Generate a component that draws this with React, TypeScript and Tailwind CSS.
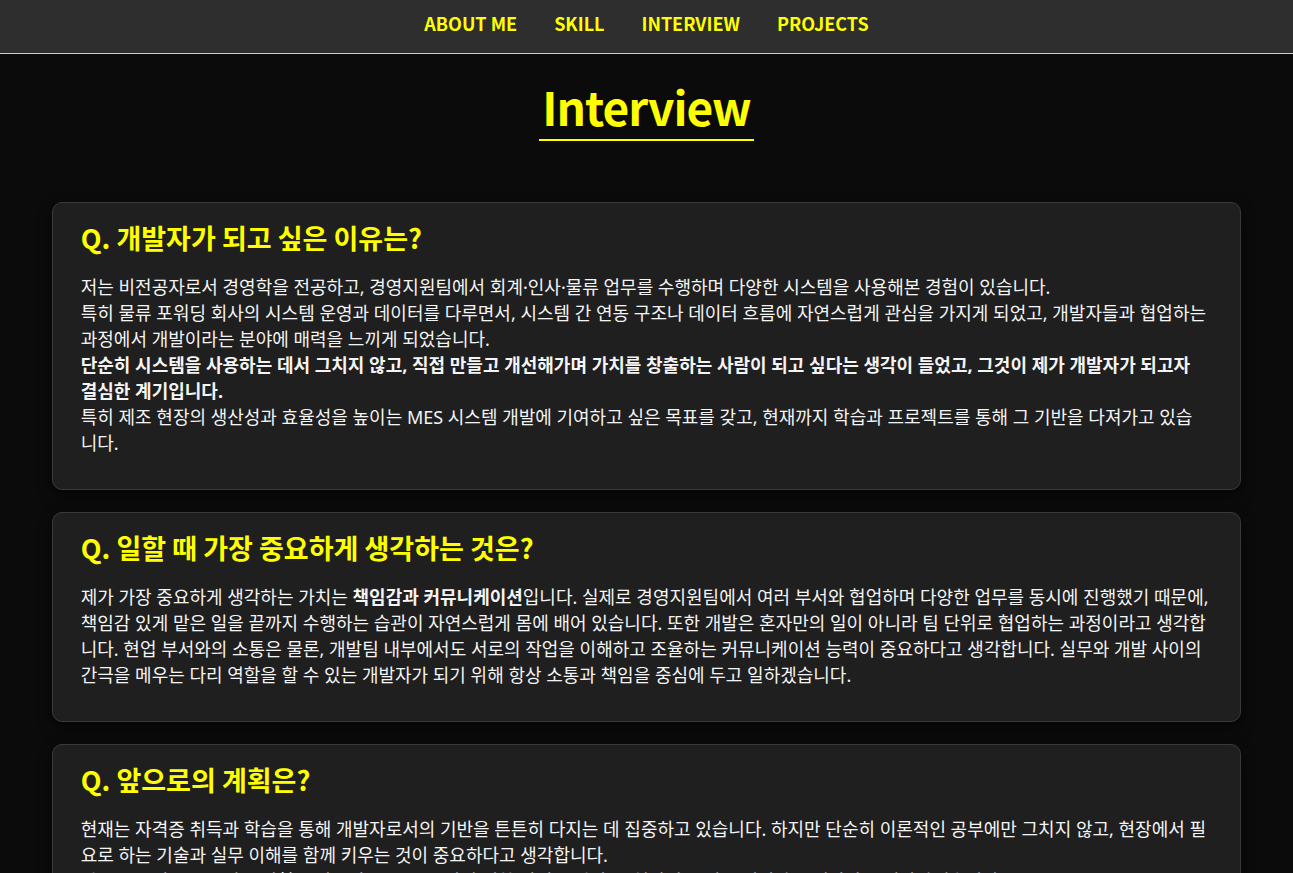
const NAV = ['ABOUT ME', 'SKILL', 'INTERVIEW', 'PROJECTS'];

function Card({
  title,
  narrow,
  children,
}: {
  title: string;
  narrow?: boolean;
  children: React.ReactNode;
}) {
  return (
    <section className="rounded-[10px] border border-[#3a3a3a] bg-[#1f1f1f] px-7 pt-[15px] pb-[33px] shadow-[0_6px_14px_rgba(0,0,0,0.6)]">
      <h3 className="text-[27px] font-bold leading-[normal] text-[#ffff00]">{title}</h3>
      <p
        className={`mt-[17px] text-[18px] leading-[26px] text-[#f4f4f4] ${narrow ? 'pr-[4px]' : ''}`}
        style={{ fontFamily: '"Noto Sans", "Noto Sans CJK KR", sans-serif' }}
      >
        {children}
      </p>
    </section>
  );
}

export default function App() {
  return (
    <div
      className="min-h-screen bg-[#0b0b0b]"
      style={{ fontFamily: '"Noto Sans CJK KR", "Noto Sans", sans-serif' }}
    >
      <nav className="flex h-[54px] items-center justify-center gap-[37px] border-b border-[#cfcfcf] bg-[#2e2e2e] pb-[6px]">
        {NAV.map((item) => (
          <a key={item} href="#" className="text-[18px] font-bold text-[#ffff00]">
            {item}
          </a>
        ))}
      </nav>

      <main className="mx-auto w-[92%] pt-[19px] pb-10">
        <div className="flex justify-center">
          <h2 className="border-b-2 border-[#ffff00] px-[3px] text-[46px] leading-[normal] tracking-[-1px] font-bold text-[#ffff00]">
            Interview
          </h2>
        </div>

        <div className="mt-[61px] flex flex-col gap-[22px]">
          <Card title="Q. 개발자가 되고 싶은 이유는?" narrow>
            저는 비전공자로서 경영학을 전공하고, 경영지원팀에서 회계·인사·물류 업무를 수행하며 다양한 시스템을 사용해본 경험이 있습니다.
            <br />
            특히 물류 포워딩 회사의 시스템 운영과 데이터를 다루면서, 시스템 간 연동 구조나 데이터 흐름에 자연스럽게 관심을 가지게 되었고, 개발자들과 협업하는 과정에서 개발이라는 분야에 매력을 느끼게 되었습니다.
            <br />
            <strong>
              단순히 시스템을 사용하는 데서 그치지 않고, 직접 만들고 개선해가며 가치를 창출하는 사람이 되고 싶다는 생각이 들었고, 그것이 제가 개발자가 되고자 결심한 계기입니다.
            </strong>
            <br />
            특히 제조 현장의 생산성과 효율성을 높이는 MES 시스템 개발에 기여하고 싶은 목표를 갖고, 현재까지 학습과 프로젝트를 통해 그 기반을 다져가고 있습니다.
          </Card>

          <Card title="Q. 일할 때 가장 중요하게 생각하는 것은?">
            제가 가장 중요하게 생각하는 가치는 <strong>책임감과 커뮤니케이션</strong>입니다. 실제로 경영지원팀에서 여러 부서와 협업하며 다양한 업무를 동시에 진행했기 때문에, 책임감 있게 맡은 일을 끝까지 수행하는 습관이 자연스럽게 몸에 배어 있습니다. 또한 개발은 혼자만의 일이 아니라 팀 단위로 협업하는 과정이라고 생각합니다. 현업 부서와의 소통은 물론, 개발팀 내부에서도 서로의 작업을 이해하고 조율하는 커뮤니케이션 능력이 중요하다고 생각합니다. 실무와 개발 사이의 간극을 메우는 다리 역할을 할 수 있는 개발자가 되기 위해 항상 소통과 책임을 중심에 두고 일하겠습니다.
          </Card>

          <Card title="Q. 앞으로의 계획은?">
            현재는 자격증 취득과 학습을 통해 개발자로서의 기반을 튼튼히 다지는 데 집중하고 있습니다. 하지만 단순히 이론적인 공부에만 그치지 않고, 현장에서 필요로 하는 기술과 실무 이해를 함께 키우는 것이 중요하다고 생각합니다.
            <br />
            앞으로는 실무 프로젝트 경험을 쌓으며 MES 시스템에 대한 이해를 넓히고, 현장의 문제를 해결하는 개발자로 성장하겠습니다.
          </Card>
        </div>
      </main>
    </div>
  );
}
